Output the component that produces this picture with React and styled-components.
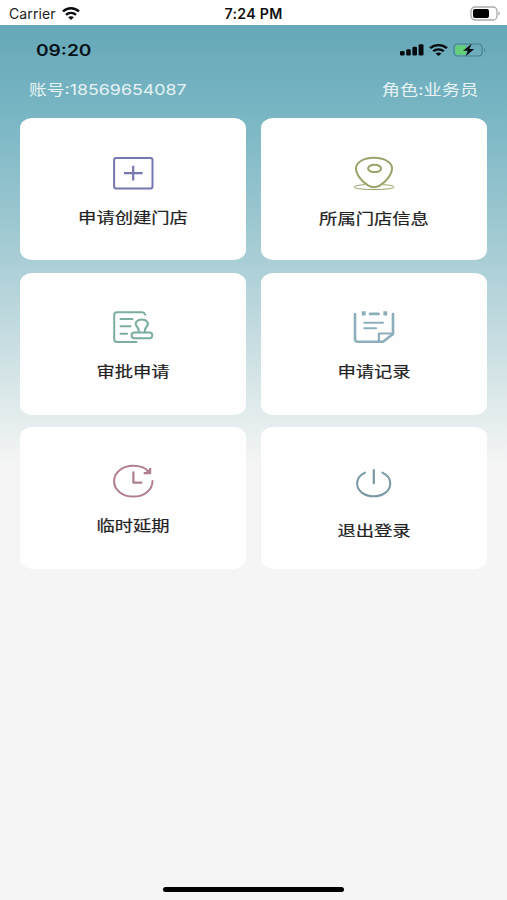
import React from "react";
import styled, { createGlobalStyle } from "styled-components";

const GlobalStyle = createGlobalStyle`
  * { box-sizing: border-box; }
  body { margin: 0; background: #f5f5f5; }
`;

const Screen = styled.div`
  width: 507px;
  height: 900px;
  display: flex;
  flex-direction: column;
  overflow: hidden;
  background: #f5f5f5;
  font-family: Inter, "Noto Sans CJK SC", sans-serif;
`;

const SystemBar = styled.header`
  height: 25px;
  flex: none;
  display: grid;
  grid-template-columns: 1fr auto 1fr;
  align-items: center;
  padding: 2px 6px 0 9px;
  background: #fff;
  color: #111;
`;

const Carrier = styled.div`
  display: flex;
  align-items: center;
  gap: 6px;
  font-size: 14px;
  letter-spacing: 0.1px;
  color: #222;
`;

const SystemTime = styled.div`
  margin-right: 3px;
  font-size: 14.2px;
  font-weight: 600;
  letter-spacing: 0.3px;
`;

const SystemBattery = styled.div`
  display: flex;
  justify-content: flex-end;
`;

const Backdrop = styled.main`
  flex: 1;
  display: flex;
  flex-direction: column;
  background: linear-gradient(
    180deg,
    #66a8b8 0,
    #78b5c3 85px,
    #98c5cf 185px,
    #bcd7dd 285px,
    #dae7e9 365px,
    #f5f5f5 440px
  );
`;

const PhoneBar = styled.div`
  height: 49px;
  display: flex;
  align-items: center;
  justify-content: space-between;
  padding: 0 20px 0 36px;
`;

const StatusIcons = styled.div`
  display: flex;
  align-items: center;
  gap: 5px;
`;

/* Wide type, anchored on the side given by $origin. */
const Wide = styled.span`
  display: block;
  white-space: nowrap;
  transform: scaleX(${(p) => p.$scale});
  transform-origin: ${(p) => p.$origin || "center"};
`;

const PhoneTime = styled(Wide)`
  padding-top: 1px;
  font-size: 15.3px;
  font-weight: 600;
  color: #07131a;
`;

const Account = styled.div`
  height: 31px;
  display: flex;
  align-items: center;
  justify-content: space-between;
  padding: 0 29px;
  color: #e6f2f5;
  font-size: 14.6px;
  line-height: 20px;
`;

const Grid = styled.div`
  display: grid;
  grid-template-columns: 1fr 1fr;
  grid-auto-rows: 142px;
  gap: 12.3px 15px;
  padding: 13.3px 20.4px 0 20.2px;
`;

const Card = styled.button`
  display: flex;
  flex-direction: column;
  align-items: center;
  border: 0;
  border-radius: 12px / 10px;
  padding: 36.5px 0 0;
  background: #fefefe;
  font-family: inherit;
  color: #222;

  svg { flex: none; }
`;

const Label = styled(Wide)`
  margin-top: ${(p) => 15.8 + p.$drop}px;
  font-size: 15px;
  line-height: 22px;
  -webkit-text-stroke: 0.2px #222;
`;

const HomeIndicator = styled.div`
  width: 181px;
  height: 5px;
  margin: auto auto 8px;
  border-radius: 3px;
  background: #000;
`;

const Glyph = ({ color, children, width = 2 }) => (
  <svg width="44" height="36" viewBox="0 0 44 36" fill="none" stroke={color} strokeWidth={width} strokeLinecap="round" strokeLinejoin="round">
    {children}
  </svg>
);

const Wifi = ({ width, height }) => (
  <svg width={width} height={height} viewBox="0 0 18 13" preserveAspectRatio="none" fill="none" stroke="#050b0e" strokeWidth="2.4">
    <path d="M1 4.5C5.5 .1 12.5 .1 17 4.5M4 7.9C6.8 5.2 11.2 5.2 14 7.9" />
    <path d="M9 13 6.2 10.2C7.8 8.8 10.2 8.8 11.8 10.2Z" fill="#050b0e" stroke="none" />
  </svg>
);

const DarkBattery = () => (
  <svg width="31" height="15" viewBox="0 0 31 15">
    <rect x="1" y="1" width="26" height="13" rx="4" fill="none" stroke="#a9a9a9" strokeWidth="1.3" />
    <rect x="3" y="3" width="16" height="9" rx="2" fill="#000" />
    <path d="M28.5 5.3q2.6 2.2 0 4.4z" fill="#a0a0a0" />
  </svg>
);

const Signal = () => (
  <svg width="24" height="12" viewBox="0 0 24 12" fill="#050b0e">
    <rect x="0" y="7" width="4.6" height="4.4" rx="1.2" />
    <rect x="6.2" y="5.2" width="4.6" height="6.2" rx="1.2" />
    <rect x="12.4" y="2.8" width="4.6" height="8.6" rx="1.2" />
    <rect x="18.6" y="0.3" width="4.9" height="11.1" rx="1.2" />
  </svg>
);

const ChargingBattery = () => (
  <svg width="34" height="14" viewBox="0 0 34 14">
    <rect x="1" y="1" width="28" height="12" rx="3.5" fill="none" stroke="#447f8e" strokeWidth="1.1" />
    <path d="M4 2.3H13V11.7H4Q2.4 11.7 2.4 10V4Q2.4 2.3 4 2.3Z" fill="#63cf78" />
    <path d="M18.8.8 10 7.8H14.9L12.6 13.2 21.3 6.1H16.4Z" fill="#050b0e" />
    <path d="M31 5q2.2 2 0 4z" fill="#447f8e" />
  </svg>
);

const PlusIcon = () => (
  <Glyph color="#7478ae">
    <rect x="3.1" y="3" width="38.4" height="30.6" rx="2" />
    <path d="M22.2 10.7V25.6M13 18.2H31.6" strokeLinecap="butt" strokeWidth="2.2" />
  </Glyph>
);

const PinIcon = () => (
  <Glyph color="#9aa268">
    <path d="M22 2.8C32 2.8 40 7.2 40 13.2C40 19 34.5 26.6 27.6 30.7Q22 33.6 16.4 30.7C9.5 26.6 4 19 4 13.2C4 7.2 12 2.8 22 2.8Z" />
    <ellipse cx="22.6" cy="13.4" rx="6.5" ry="3.7" />
    <path d="M12.5 29.7C6.2 30 2 31 2 32.1C2 33.5 11 34.5 22 34.5S42 33.5 42 32.1C42 31 37.8 30 31.5 29.7" strokeWidth="1" />
  </Glyph>
);

const StampIcon = () => (
  <Glyph color="#7bada0">
    <path d="M34.3 5.7Q33.2 3.3 31 3.3H6Q3.2 3.3 3.2 6V30.2Q3.2 32.9 6 32.9H25.5M9.5 10H21.5M9.5 17.3H19.5M9.5 24.8H16" />
    <rect x="20.6" y="23.6" width="20.6" height="5.6" rx="2.6" />
    <path d="M27.4 23.2Q28.6 20.5 26 17.7C22.6 13.8 26.4 10.6 30.8 10.6S39 13.8 35.6 17.7Q33 20.5 34.2 23.2" />
  </Glyph>
);

const NotesIcon = () => (
  <Glyph color="#8daebb" width={2.6}>
    <path d="M3 5V30Q3 32.8 6 32.8H31L41 25V5M18 4.9H26.6" />
    <path d="M11.7 2.3V6.5M33.3 2.3V6.5" strokeWidth="3.8" strokeLinecap="butt" />
    <path d="M12.3 13.7H31M12.3 19.2H24" strokeWidth="2.1" />
    <path d="M26.9 32V24.5H40.2" strokeWidth="2.2" />
  </Glyph>
);

const ExtendIcon = () => (
  <Glyph color="#b07f8c">
    <path d="M37.8 8.6C34.5 5 29 2.8 22.3 2.8C11.4 2.8 3.1 9.5 3.1 18.2S11.4 33.6 22.3 33.6S41.5 27 41.5 18" />
    <path d="M39.1 5V10.2H32.7M38.6 10L35.8 7.5M22.4 8.6V19.7H31.2" strokeLinecap="butt" strokeWidth="2.2" />
  </Glyph>
);

const PowerIcon = () => (
  <Glyph color="#7899a4">
    <path d="M13 9.6C7.9 12 5.1 16.3 5.1 20.6C5.1 27.7 12.3 33.3 21.7 33.3S38.3 27.7 38.3 20.6C38.3 16.3 35.5 12 30.4 9.6" />
    <path d="M21.8 7.2V20.2" strokeWidth="2.2" />
  </Glyph>
);

const actions = [
  { label: "申请创建门店", Icon: PlusIcon, drop: 0 },
  { label: "所属门店信息", Icon: PinIcon, drop: 1 },
  { label: "审批申请", Icon: StampIcon, drop: 0 },
  { label: "申请记录", Icon: NotesIcon, drop: 0 },
  { label: "临时延期", Icon: ExtendIcon, drop: 0 },
  { label: "退出登录", Icon: PowerIcon, drop: 4.7 },
];

export default function App() {
  return (
    <Screen>
      <GlobalStyle />
      <SystemBar>
        <Carrier>
          <span>Carrier</span>
          <Wifi width={18} height={13} />
        </Carrier>
        <SystemTime>7:24 PM</SystemTime>
        <SystemBattery>
          <DarkBattery />
        </SystemBattery>
      </SystemBar>
      <Backdrop>
        <PhoneBar>
          <PhoneTime $scale={1.25} $origin="left">09:20</PhoneTime>
          <StatusIcons>
            <Signal />
            <Wifi width={19} height={12} />
            <ChargingBattery />
          </StatusIcons>
        </PhoneBar>
        <Account>
          <Wide $scale={1.22} $origin="left">账号:18569654087</Wide>
          <Wide $scale={1.25} $origin="right">角色:业务员</Wide>
        </Account>
        <Grid>
          {actions.map(({ label, Icon, drop }) => (
            <Card key={label} type="button">
              <Icon />
              <Label $scale={1.22} $drop={drop}>{label}</Label>
            </Card>
          ))}
        </Grid>
        <HomeIndicator />
      </Backdrop>
    </Screen>
  );
}
